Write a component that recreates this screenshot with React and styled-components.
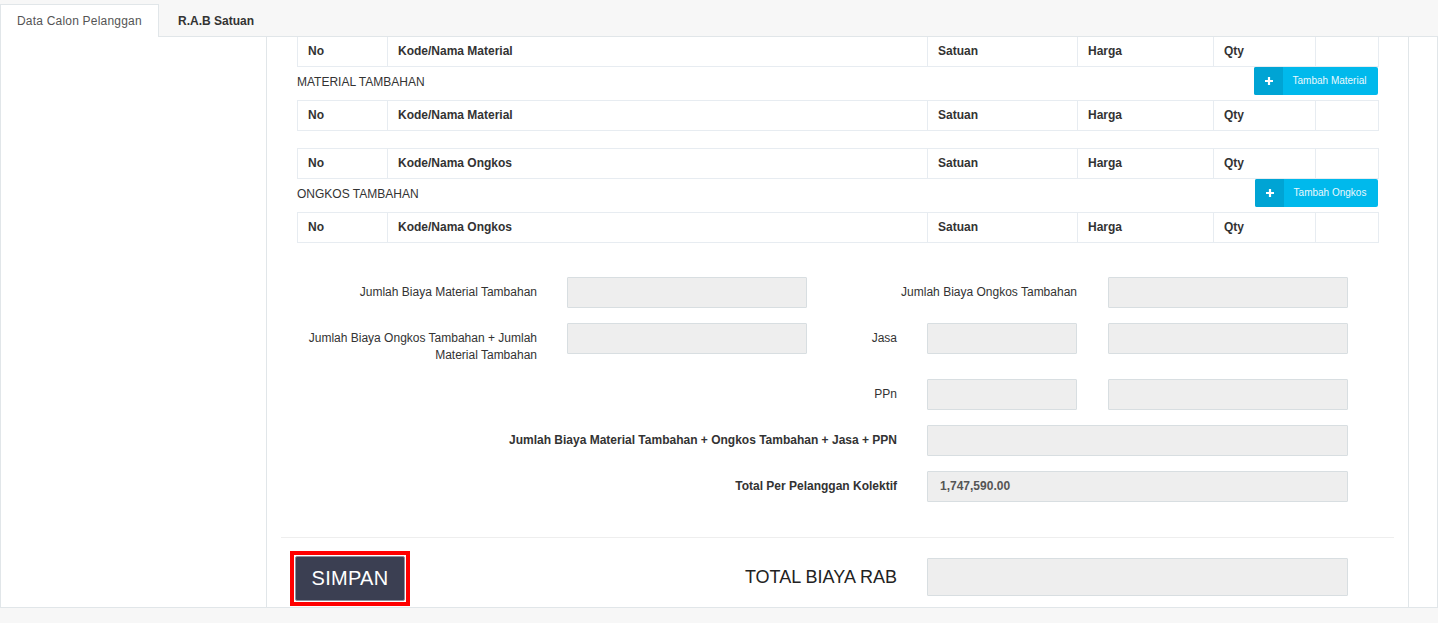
import React from "react";
import styled, { createGlobalStyle } from "styled-components";

const GlobalStyle = createGlobalStyle`
  html, body { margin: 0; padding: 0; }
  body {
    background: #f7f7f7;
    font-family: "Liberation Sans", Arial, Helvetica, sans-serif;
    color: #333;
    font-size: 12px;
  }
  * { box-sizing: border-box; }
`;

const Page = styled.div`
  width: 1438px;
  height: 623px;
  overflow: hidden;
`;

const TabBar = styled.div`
  display: flex;
  height: 37px;
  padding-top: 4px;
  border-bottom: 1px solid #e1e6e9;
  background: #f7f7f7;
`;

const Tab = styled.div`
  height: ${(p) => (p.$active ? "33px" : "32px")};
  display: flex;
  align-items: center;
  padding: 0 ${(p) => (p.$active ? "16px" : "19px")} 0 ${(p) => (p.$active ? "16px" : "18px")};
  width: ${(p) => (p.$active ? "159px" : "auto")};
  font-size: 12px;
  letter-spacing: ${(p) => (p.$active ? "0.2px" : "0")};
  font-weight: ${(p) => (p.$active ? "normal" : "bold")};
  color: ${(p) => (p.$active ? "#555" : "#333")};
  background: ${(p) => (p.$active ? "#fff" : "transparent")};
  border: 1px solid ${(p) => (p.$active ? "#e1e6e9" : "transparent")};
  border-bottom: none;
  margin-bottom: ${(p) => (p.$active ? "-1px" : "0")};
  position: relative;
`;

const Panel = styled.div`
  display: flex;
  height: 571px;
  background: #fff;
  border: 1px solid #e1e6e9;
  border-top: none;
  overflow: hidden;
`;

const SideColumn = styled.div`
  width: 266px;
  flex: none;
  border-right: 1px solid #e1e6e9;
`;

const MainColumn = styled.div`
  width: 1142px;
  flex: none;
  border-right: 1px solid #e1e6e9;
  padding: 0 14px;
`;

const Section = styled.div`
  padding: 0 16px 0 16px;
`;

const Table = styled.table`
  width: 100%;
  border-collapse: collapse;
  table-layout: fixed;
  margin-top: ${(p) => p.$mt || 0}px;
  th {
    height: ${(p) => (p.$noTop ? 29 : 30)}px;
    border: 1px solid #e7ecf1;
    border-top: ${(p) => (p.$noTop ? "none" : "1px solid #e7ecf1")};
    padding: 0 10px;
    text-align: left;
    font-size: 12px;
    font-weight: bold;
    color: #333;
  }
`;

const ActionRow = styled.div`
  display: flex;
  align-items: center;
  justify-content: space-between;
  height: 28px;
  margin: ${(p) => p.$mt || 0}px 0 5px;
`;

const SectionLabel = styled.span`
  font-size: 12px;
  color: #333;
  padding-top: 3px;
`;

const AddButton = styled.button`
  display: flex;
  align-items: stretch;
  height: 28px;
  width: ${(p) => p.$w}px;
  padding: 0;
  border: none;
  border-radius: 2px;
  overflow: hidden;
  background: #00b9ec;
  color: #fff;
  font-family: inherit;
  cursor: pointer;
`;

const AddIcon = styled.span`
  width: 29px;
  flex: none;
  display: flex;
  align-items: center;
  justify-content: center;
  background: #00a4d4;
`;

const AddText = styled.span`
  flex: 1;
  display: flex;
  align-items: center;
  justify-content: center;
  font-size: 10px;
  color: #eaf8fd;
  padding-right: 2px;
`;

const FormGrid = styled.div`
  display: grid;
  grid-template-columns: 240px 30px 240px 90px 30px 150px 31px 240px;
  row-gap: 15px;
  margin-top: 34px;
`;

const FieldLabel = styled.div`
  grid-column: ${(p) => p.$col};
  text-align: right;
  padding-top: 7px;
  line-height: 17px;
  font-size: 12px;
  font-weight: ${(p) => (p.$bold ? "bold" : "normal")};
  color: #333;
`;

const Field = styled.div`
  grid-column: ${(p) => p.$col};
  height: ${(p) => p.$h || 31}px;
  background: #eeeeee;
  border: 1px solid #d8dee1;
  border-radius: 1px;
  padding: 0 12px;
  display: flex;
  align-items: center;
  font-size: 12px;
  font-weight: bold;
  color: #555;
`;

const Divider = styled.hr`
  margin: 35px 0 0;
  border: none;
  border-top: 1px solid #eeeeee;
`;

const FooterRow = styled.div`
  display: flex;
  align-items: flex-start;
  padding: 13px 0 0 9px;
`;

const Highlight = styled.div`
  border: 4px solid #ff0000;
  padding: 1px;
  background: #fff;
  width: 120px;
  flex: none;
`;

const SaveButton = styled.button`
  display: block;
  width: 110px;
  height: 45px;
  background: #3b3f52;
  border: 1px solid #8e92a0;
  border-radius: 2px;
  color: #fff;
  font-family: inherit;
  font-size: 20px;
  letter-spacing: 0.3px;
  padding: 0;
  cursor: pointer;
`;

const TotalLabel = styled.div`
  width: 487px;
  flex: none;
  text-align: right;
  font-size: 18px;
  color: #222;
  padding-top: 16px;
`;

const TotalField = styled(Field)`
  width: 421px;
  margin-top: 7px;
  margin-left: 30px;
`;

const Filler = styled.div`
  flex: 1;
`;

const widths = [90, 540, 150, 136, 102, 63];

function HeaderTable({ name, noTop, mt }) {
  const headers = ["No", name, "Satuan", "Harga", "Qty", ""];
  return (
    <Table $noTop={noTop} $mt={mt}>
      <colgroup>
        {widths.map((w, i) => (
          <col key={i} style={{ width: w }} />
        ))}
      </colgroup>
      <thead>
        <tr>
          {headers.map((h, i) => (
            <th key={i}>{h}</th>
          ))}
        </tr>
      </thead>
    </Table>
  );
}

function PlusIcon() {
  return (
    <svg width="10" height="10" viewBox="0 0 10 10">
      <path d="M5 1v8M1 5h8" stroke="#fff" strokeWidth="2.2" />
    </svg>
  );
}

function AddAction({ label, text, width, mt }) {
  return (
    <ActionRow $mt={mt}>
      <SectionLabel>{label}</SectionLabel>
      <AddButton $w={width}>
        <AddIcon>
          <PlusIcon />
        </AddIcon>
        <AddText>{text}</AddText>
      </AddButton>
    </ActionRow>
  );
}

export default function App() {
  return (
    <Page>
      <GlobalStyle />
      <TabBar>
        <Tab $active>Data Calon Pelanggan</Tab>
        <Tab>R.A.B Satuan</Tab>
      </TabBar>
      <Panel>
        <SideColumn />
        <MainColumn>
          <Section>
            <HeaderTable name="Kode/Nama Material" noTop />
            <AddAction label="MATERIAL TAMBAHAN" text="Tambah Material" width={124} />
            <HeaderTable name="Kode/Nama Material" />
            <HeaderTable name="Kode/Nama Ongkos" mt={17} />
            <AddAction label="ONGKOS TAMBAHAN" text="Tambah Ongkos" width={123} />
            <HeaderTable name="Kode/Nama Ongkos" />

            <FormGrid>
              <FieldLabel $col="1">Jumlah Biaya Material Tambahan</FieldLabel>
              <Field $col="3" />
              <FieldLabel $col="4 / 7">Jumlah Biaya Ongkos Tambahan</FieldLabel>
              <Field $col="8" />

              <FieldLabel $col="1">
                Jumlah Biaya Ongkos Tambahan + Jumlah
                <br />
                Material Tambahan
              </FieldLabel>
              <Field $col="3" />
              <FieldLabel $col="4">Jasa</FieldLabel>
              <Field $col="6" />
              <Field $col="8" />

              <FieldLabel $col="4">PPn</FieldLabel>
              <Field $col="6" />
              <Field $col="8" />

              <FieldLabel $col="1 / 5" $bold>
                Jumlah Biaya Material Tambahan + Ongkos Tambahan + Jasa + PPN
              </FieldLabel>
              <Field $col="6 / 9" />

              <FieldLabel $col="1 / 5" $bold>
                Total Per Pelanggan Kolektif
              </FieldLabel>
              <Field $col="6 / 9">1,747,590.00</Field>
            </FormGrid>
          </Section>
          <Divider />
          <FooterRow>
            <Highlight>
              <SaveButton>SIMPAN</SaveButton>
            </Highlight>
            <TotalLabel>TOTAL BIAYA RAB</TotalLabel>
            <TotalField $h={38} />
            <Filler />
          </FooterRow>
        </MainColumn>
      </Panel>
    </Page>
  );
}
